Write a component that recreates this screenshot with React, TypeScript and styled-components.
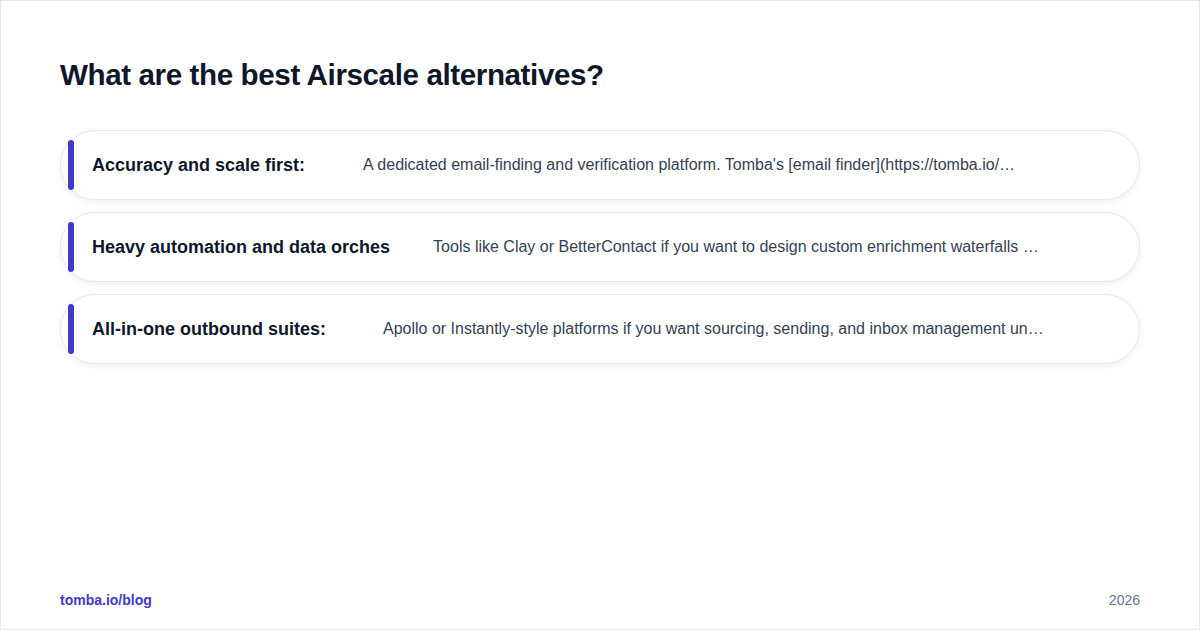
import React from "react";
import styled, { createGlobalStyle } from "styled-components";

const G = createGlobalStyle`
  html,body{margin:0;padding:0;background:#fff;}
  body{font-family:"Liberation Sans",Arial,sans-serif;}
`;
const Page = styled.div`
  width:1200px;height:630px;box-sizing:border-box;border:1px solid #e5e7eb;
  padding:54px 59px 21px 59px;display:flex;flex-direction:column;
`;
const Title = styled.h1`
  margin:0 0 35px;font-size:29.6px;font-weight:700;color:#0f172a;letter-spacing:-0.4px;line-height:40px;
`;
const List = styled.div`display:flex;flex-direction:column;gap:12px;flex:1;`;
const Card = styled.div<{ $gap: number }>`
  height:70px;box-sizing:border-box;border:1px solid #e5e7eb;border-radius:35px;
  box-shadow:0 2px 6px rgba(15,23,42,0.06);display:flex;align-items:center;
  padding-left:7px;gap:${p => p.$gap}px;
`;
const Lead = styled.div`display:flex;align-items:center;flex:none;`;
const Bar = styled.div`width:6px;height:50px;border-radius:3px;background:#4338ca;margin-right:18px;flex:none;`;
const Label = styled.div`font-size:18px;font-weight:700;color:#0f172a;white-space:nowrap;`;
const Desc = styled.div`font-size:16px;color:#334155;white-space:nowrap;`;
const Footer = styled.div`display:flex;justify-content:space-between;align-items:center;font-size:14px;`;
const Brand = styled.span`color:#4338ca;font-weight:700;`;
const Year = styled.span`color:#64748b;`;

const items = [
  ["Accuracy and scale first:", "A dedicated email-finding and verification platform. Tomba's [email finder](https://tomba.io/…", 58],
  ["Heavy automation and data orches", "Tools like Clay or BetterContact if you want to design custom enrichment waterfalls …", 43],
  ["All-in-one outbound suites:", "Apollo or Instantly-style platforms if you want sourcing, sending, and inbox management un…", 57],
] as const;

export default function App() {
  return (
    <Page>
      <G />
      <Title>What are the best Airscale alternatives?</Title>
      <List>
        {items.map(([l, d, g]) => (
          <Card key={l} $gap={g}>
            <Lead>
              <Bar />
              <Label>{l}</Label>
            </Lead>
            <Desc>{d}</Desc>
          </Card>
        ))}
      </List>
      <Footer><Brand>tomba.io/blog</Brand><Year>2026</Year></Footer>
    </Page>
  );
}
